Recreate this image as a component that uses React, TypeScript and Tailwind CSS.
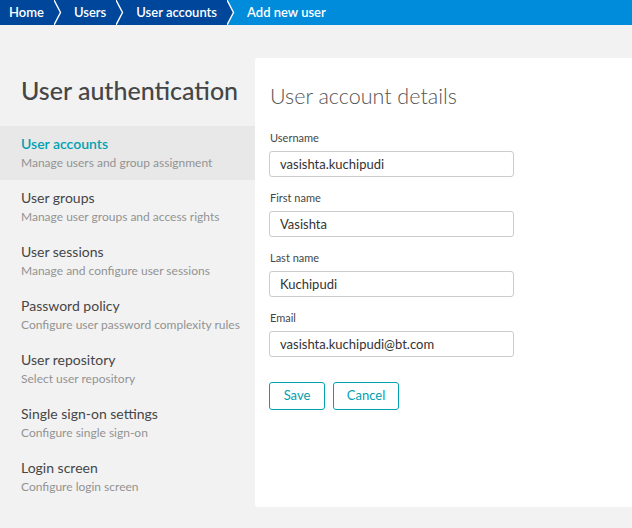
import React from "react";

const DARK = "#00479b";
const LIGHT = "#008cdb";

const crumbs = [
  { label: "Home", color: DARK },
  { label: "Users", color: DARK },
  { label: "User accounts", color: DARK },
  { label: "Add new user", color: LIGHT },
];

const navItems = [
  { title: "User accounts", sub: "Manage users and group assignment", active: true },
  { title: "User groups", sub: "Manage user groups and access rights" },
  { title: "User sessions", sub: "Manage and configure user sessions" },
  { title: "Password policy", sub: "Configure user password complexity rules" },
  { title: "User repository", sub: "Select user repository" },
  { title: "Single sign-on settings", sub: "Configure single sign-on" },
  { title: "Login screen", sub: "Configure login screen" },
];

const fields = [
  { label: "Username", value: "vasishta.kuchipudi" },
  { label: "First name", value: "Vasishta" },
  { label: "Last name", value: "Kuchipudi" },
  { label: "Email", value: "vasishta.kuchipudi@bt.com" },
];

function Separator({ left, right }: { left: string; right: string }) {
  return (
    <svg width="20" height="25" viewBox="0 0 20 25" className="block shrink-0">
      <rect x="0" y="0" width="20" height="25" fill={right} />
      <polygon points="0,0 6.5,12.5 0,25" fill={left} />
      <polyline
        points="0,0 6.5,12.5 0,25"
        fill="none"
        stroke="#ffffff"
        strokeWidth="1.4"
      />
    </svg>
  );
}

function Breadcrumb() {
  return (
    <nav className="flex h-[25px] w-full bg-[#008cdb] text-[13px] font-semibold text-white">
      {crumbs.map((c, i) => (
        <React.Fragment key={c.label}>
          <div
            className={`flex h-full items-center ${i === 0 ? "pl-[9px]" : ""} pr-[10px]`}
            style={{ background: c.color }}
          >
            {c.label}
          </div>
          {i < crumbs.length - 1 && (
            <Separator left={c.color} right={crumbs[i + 1].color} />
          )}
        </React.Fragment>
      ))}
    </nav>
  );
}

export default function App() {
  return (
    <div
      className="flex min-h-[528px] w-[632px] flex-col bg-[#f2f2f2]"
      style={{ fontFamily: "Lato, 'Open Sans', sans-serif" }}
    >
      <Breadcrumb />
      <div className="flex pt-[33px]">
        {/* Left navigation */}
        <aside className="w-[255px] shrink-0">
          <h1 className="pl-[21px] pt-[17px] text-[25px] font-medium leading-[30px] text-[#454646]">
            User authentication
          </h1>
          <ul className="mt-[21px]">
            {navItems.map((item) => (
              <li
                key={item.title}
                className={`whitespace-nowrap px-[21px] pb-[8px] pt-[8px] ${item.active ? "bg-[#e8e8e8]" : ""}`}
              >
                <div
                  className={`text-[14px] leading-[20px] ${item.active ? "font-semibold text-[#00a1b2]" : "text-[#454646]"}`}
                >
                  {item.title}
                </div>
                <div className="text-[12px] leading-[18px] text-[#939393]">
                  {item.sub}
                </div>
              </li>
            ))}
          </ul>
        </aside>

        {/* Form panel */}
        <main className="h-[449px] flex-1 rounded-l-[3px] bg-white pl-[15px] pt-[24px]">
          <h2 className="text-[21.5px] font-light leading-[28px] text-[#555555]">
            User account details
          </h2>
          <form className="mt-[20px] flex flex-col">
            {fields.map((f) => (
              <label key={f.label} className="mb-[13px] flex flex-col">
                <span className="mb-[6px] text-[11px] leading-[15px] text-[#454646]">
                  {f.label}
                </span>
                <input
                  readOnly
                  value={f.value}
                  className="h-[26px] w-[245px] -translate-x-px rounded-[3px] border border-[#cccccc] px-[10px] text-[13px] text-[#333333] outline-none"
                  style={{ fontFamily: "Lato, 'Open Sans', sans-serif" }}
                />
              </label>
            ))}
            <div className="mt-[12px] flex gap-[8px]">
              <button
                type="button"
                className="h-[28px] w-[56px] -translate-x-px rounded-[3px] border border-[#00a1b2] text-[13px] text-[#00a1b2]"
              >
                Save
              </button>
              <button
                type="button"
                className="h-[28px] w-[66px] -translate-x-px rounded-[3px] border border-[#00a1b2] text-[13px] text-[#00a1b2]"
              >
                Cancel
              </button>
            </div>
          </form>
        </main>
      </div>
    </div>
  );
}
